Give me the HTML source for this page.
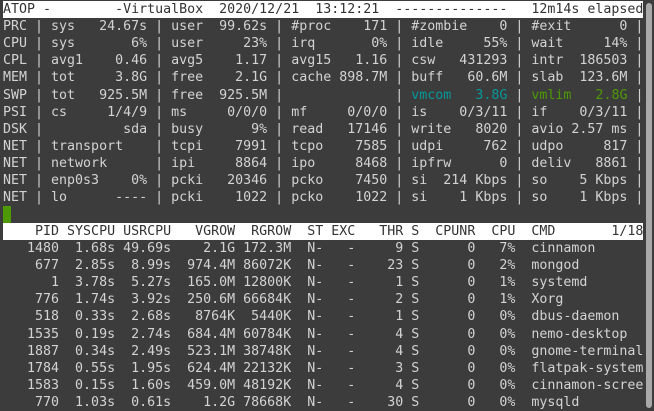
<!DOCTYPE html>
<html><head><meta charset="utf-8"><style>
html,body{margin:0;padding:0;width:654px;height:411px;background:#3c3c3c;overflow:hidden}
.l{position:absolute;left:3px;height:17px;line-height:17px;font-family:"DejaVu Sans Mono","Liberation Mono",monospace;font-size:13.3px;color:#d3d3d3;white-space:pre}
.w{background:#fff;color:#333;width:640px}
.c{color:#06989a}.g{color:#4e9a06}
#cur{position:absolute;left:3px;top:206px;width:8px;height:17px;background:#4e9a06}
#sb{position:absolute;left:646px;top:3px;width:6px;height:405px;background:#a9a9a9;border-radius:3px}
</style></head><body>
<div class="l w" style="top:1px">ATOP -        -VirtualBox  2020/12/21  13:12:21  --------------   12m14s elapsed</div>
<div class="l" style="top:18px">PRC | sys   24.67s | user  99.62s | #proc    171 | #zombie    0 | #exit      0 |</div>
<div class="l" style="top:35px">CPU | sys       6% | user     23% | irq       0% | idle     55% | wait     14% |</div>
<div class="l" style="top:52px">CPL | avg1    0.46 | avg5    1.17 | avg15   1.16 | csw   431293 | intr  186503 |</div>
<div class="l" style="top:69px">MEM | tot     3.8G | free    2.1G | cache 898.7M | buff   60.6M | slab  123.6M |</div>
<div class="l" style="top:87px">SWP | tot   925.5M | free  925.5M |              | <span class="c">vmcom   3.8G</span> | <span class="g">vmlim   2.8G</span> |</div>
<div class="l" style="top:104px">PSI | cs     1/4/9 | ms     0/0/0 | mf     0/0/0 | is    0/3/11 | if    0/3/11 |</div>
<div class="l" style="top:121px">DSK |          sda | busy      9% | read   17146 | write   8020 | avio 2.57 ms |</div>
<div class="l" style="top:138px">NET | transport    | tcpi    7991 | tcpo    7585 | udpi     762 | udpo     817 |</div>
<div class="l" style="top:155px">NET | network      | ipi     8864 | ipo     8468 | ipfrw      0 | deliv   8861 |</div>
<div class="l" style="top:172px">NET | enp0s3    0% | pcki   20346 | pcko    7450 | si  214 Kbps | so    5 Kbps |</div>
<div class="l" style="top:189px">NET | lo      ---- | pcki    1022 | pcko    1022 | si    1 Kbps | so    1 Kbps |</div>
<div id="cur"></div>
<div class="l w" style="top:223px">    PID SYSCPU USRCPU   VGROW  RGROW  ST EXC   THR S  CPUNR  CPU  CMD       1/18</div>
<div class="l" style="top:240px">   1480  1.68s 49.69s    2.1G 172.3M  N-   -     9 S      0   7%  cinnamon</div>
<div class="l" style="top:257px">    677  2.85s  8.99s  974.4M 86072K  N-   -    23 S      0   2%  mongod</div>
<div class="l" style="top:274px">      1  3.78s  5.27s  165.0M 12800K  N-   -     1 S      0   1%  systemd</div>
<div class="l" style="top:291px">    776  1.74s  3.92s  250.6M 66684K  N-   -     2 S      0   1%  Xorg</div>
<div class="l" style="top:308px">    518  0.33s  2.68s   8764K  5440K  N-   -     1 S      0   0%  dbus-daemon</div>
<div class="l" style="top:326px">   1535  0.19s  2.74s  684.4M 60784K  N-   -     4 S      0   0%  nemo-desktop</div>
<div class="l" style="top:343px">   1887  0.34s  2.49s  523.1M 38748K  N-   -     4 S      0   0%  gnome-terminal</div>
<div class="l" style="top:360px">   1784  0.55s  1.95s  624.4M 22132K  N-   -     3 S      0   0%  flatpak-system</div>
<div class="l" style="top:377px">   1583  0.15s  1.60s  459.0M 48192K  N-   -     4 S      0   0%  cinnamon-scree</div>
<div class="l" style="top:394px">    770  1.03s  0.61s    1.2G 78668K  N-   -    30 S      0   0%  mysqld</div>
<div id="sb"></div>
</body></html>
